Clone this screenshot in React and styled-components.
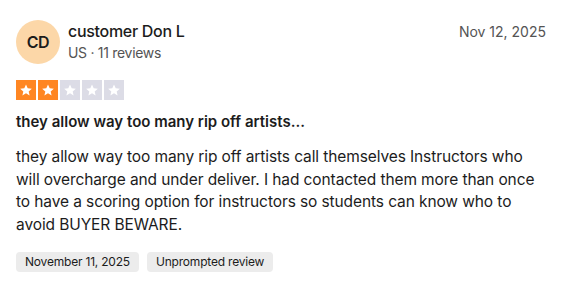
import React from "react";
import styled, { createGlobalStyle } from "styled-components";

const GlobalStyle = createGlobalStyle`
  body {
    margin: 0;
    background: #ffffff;
    font-family: Inter, "Noto Sans", sans-serif;
    color: #1c1c1c;
  }
`;

const colors = {
  text: "#1c1c1c",
  muted: "#545454",
  avatar: "#fcd7a8",
  starOn: "#ff8622",
  starOff: "#dcdce6",
  tag: "#ececec"
};

const Card = styled.article`
  padding: 20px 30px 20px 16px;
  display: flex;
  flex-direction: column;
`;

const Header = styled.header`
  display: flex;
  align-items: flex-start;
  gap: 8px;
`;

const Avatar = styled.div`
  width: 44px;
  height: 44px;
  border-radius: 50%;
  background: ${colors.avatar};
  display: flex;
  align-items: center;
  justify-content: center;
  font-size: 16px;
  font-weight: 600;
  letter-spacing: -0.3px;
  color: ${colors.text};
  flex-shrink: 0;
`;

const Consumer = styled.div`
  display: flex;
  flex-direction: column;
  flex: 1;
  padding-top: 1px;
`;

const Name = styled.span`
  font-size: 16px;
  font-weight: 500;
  line-height: 20px;
  letter-spacing: -0.3px;
`;

const Meta = styled.span`
  font-size: 14px;
  line-height: 20px;
  color: ${colors.muted};
  margin-top: 2px;
  letter-spacing: -0.3px;
`;

const DateText = styled.time`
  font-size: 14px;
  color: ${colors.muted};
  line-height: 20px;
  padding-top: 2px;
`;

const Stars = styled.div`
  display: flex;
  gap: 2px;
  margin-top: 16px;
`;

const StarBox = styled.span`
  width: 20px;
  height: 20px;
  background: ${({ $on }) => ($on ? colors.starOn : colors.starOff)};
  display: flex;
  align-items: center;
  justify-content: center;
`;

const Title = styled.h2`
  margin: 11px 0 0;
  font-size: 15px;
  font-weight: 600;
  line-height: 22px;
`;

const Body = styled.p`
  margin: 13px 0 0;
  font-size: 15.5px;
  line-height: 22.5px;
  letter-spacing: -0.1px;
`;

const Tags = styled.div`
  display: flex;
  gap: 8px;
  margin-top: 16px;
`;

const Tag = styled.span`
  background: ${colors.tag};
  border-radius: 4px;
  padding: 0 9px;
  height: 20px;
  line-height: 20px;
  font-size: 12px;
  letter-spacing: -0.2px;
  color: ${colors.text};
`;

const Star = ({ on }) => (
  <StarBox $on={on}>
    <svg width="14" height="14" viewBox="0 0 24 24">
      <path
        fill="#ffffff"
        d="M12 2.5l2.9 6.6 7.1.6-5.4 4.7 1.6 7-6.2-3.7-6.2 3.7 1.6-7L2 9.7l7.1-.6z"
      />
    </svg>
  </StarBox>
);

export default function App() {
  const rating = 2;
  return (
    <>
      <GlobalStyle />
      <Card>
        <Header>
          <Avatar>CD</Avatar>
          <Consumer>
            <Name>customer Don L</Name>
            <Meta>US · 11 reviews</Meta>
          </Consumer>
          <DateText>Nov 12, 2025</DateText>
        </Header>
        <Stars>
          {[1, 2, 3, 4, 5].map((n) => (
            <Star key={n} on={n <= rating} />
          ))}
        </Stars>
        <Title>they allow way too many rip off artists...</Title>
        <Body>
          they allow way too many rip off artists call themselves Instructors who
          will overcharge and under deliver. I had contacted them more than once
          to have a scoring option for instructors so students can know who to
          avoid BUYER BEWARE.
        </Body>
        <Tags>
          <Tag>November 11, 2025</Tag>
          <Tag>Unprompted review</Tag>
        </Tags>
      </Card>
    </>
  );
}
